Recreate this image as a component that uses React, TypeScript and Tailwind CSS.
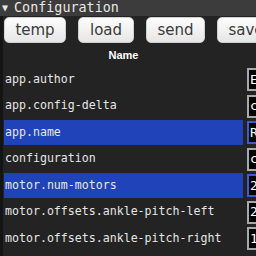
import React from "react";

const rows = [
  { name: "app.author", value: "E", selected: false },
  { name: "app.config-delta", value: "c", selected: false },
  { name: "app.name", value: "R", selected: true },
  { name: "configuration", value: "c", selected: false },
  { name: "motor.num-motors", value: "2", selected: true },
  { name: "motor.offsets.ankle-pitch-left", value: "2", selected: false },
  { name: "motor.offsets.ankle-pitch-right", value: "1", selected: false },
];

const buttons = [
  { label: "temp", w: "w-[62px]" },
  { label: "load", w: "w-[56px]" },
  { label: "send", w: "w-[59px]" },
  { label: "save", w: "w-[58px]" },
];

export default function App() {
  return (
    <div className="w-[256px] h-[256px] overflow-hidden bg-[#232323] font-['DejaVu_Sans_Mono',monospace]">
      <div className="h-[16px] bg-[#3c3c3c] flex items-center pl-[2px] text-[13.4px] leading-none text-[#e8e8e8] whitespace-nowrap">
        <span className="text-[10px] mr-[6px]">▼</span>
        <span>Configuration</span>
      </div>
      <div className="border-l-[3px] border-[#141414] pl-[1px] h-[240px]">
        <div className="flex gap-3 pt-[1px] whitespace-nowrap">
          {buttons.map((b) => (
            <div
              key={b.label}
              className={`${b.w} shrink-0 h-[26px] rounded-[5px] border border-[#cfcfcf] bg-gradient-to-b from-[#fdfdfd] to-[#e6e6e6] flex items-center justify-center text-[15px] text-[#3a3a3a] font-['DejaVu_Sans',sans-serif]`}
            >
              {b.label}
            </div>
          ))}
        </div>
        <div className="w-[239px] h-[24px] flex items-center justify-center text-[11px] font-bold text-white font-['Liberation_Sans',sans-serif]">
          Name
        </div>
        <div className="flex flex-col gap-[1.5px]">
          {rows.map((r) => (
            <div key={r.name} className="flex h-[25px] items-center">
              <div
                className={`w-[239px] h-[25px] shrink-0 flex items-center pl-[1px] text-[11.6px] whitespace-nowrap text-[#e6e6e6] ${
                  r.selected ? "bg-[#2143b9]" : ""
                }`}
              >
                {r.name}
              </div>
              <div
                className={`ml-[4px] w-[20px] h-[23px] shrink-0 border-2 bg-black flex items-center pl-[1px] text-[13px] text-white ${
                  r.selected ? "border-[#3a5ccc]" : "border-[#a8a8a8]"
                }`}
              >
                {r.value}
              </div>
            </div>
          ))}
        </div>
      </div>
    </div>
  );
}
